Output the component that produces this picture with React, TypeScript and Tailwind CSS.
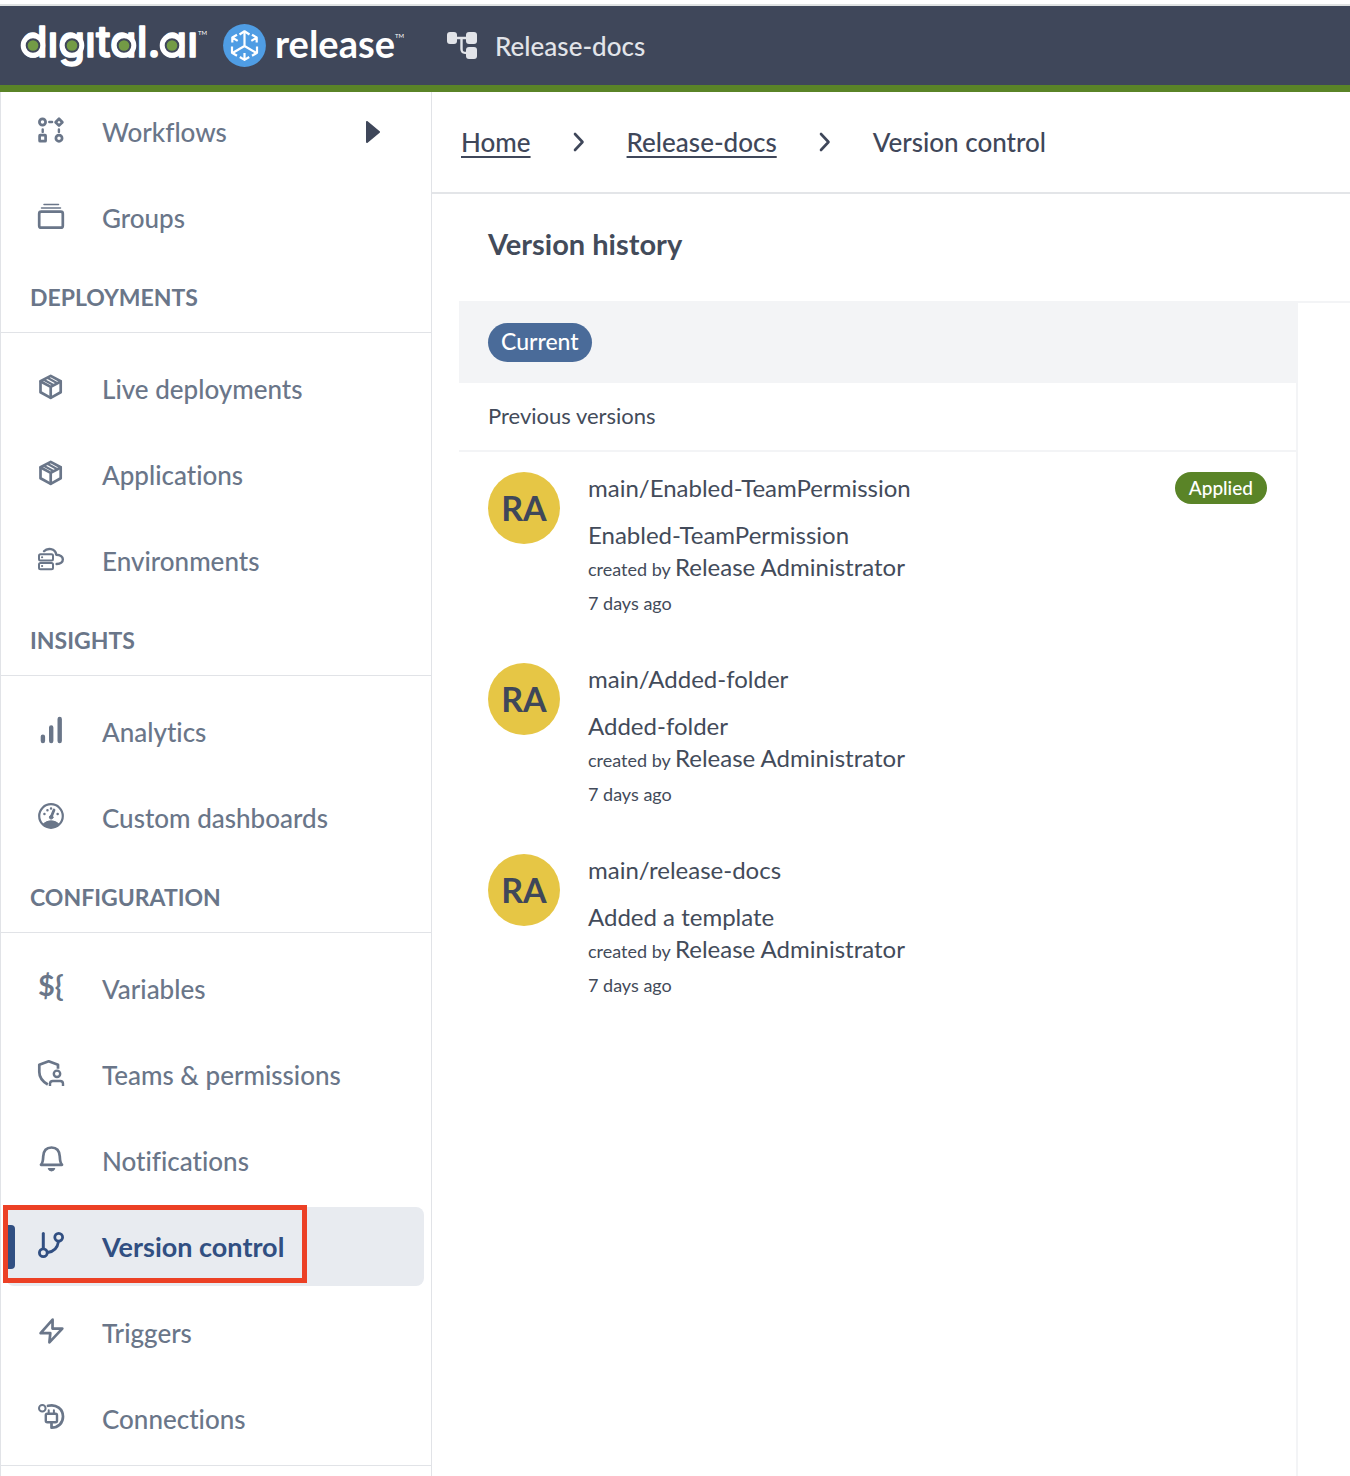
import type { ReactNode } from 'react'
import { clsx } from 'clsx'

type NavItem = {
  label: string
  icon: ReactNode
  active?: boolean
  expandable?: boolean
}

type NavSection = {
  title?: string
  items: NavItem[]
}

type Version = {
  name: string
  message: string
  author: string
  initials: string
  age: string
  applied?: boolean
}

function Icon({ children }: { children: ReactNode }) {
  return (
    <svg
      viewBox="0 0 26 26"
      className="mb-1 size-[26px] shrink-0 overflow-visible"
      fill="none"
      stroke="currentColor"
      strokeWidth="2.7"
      strokeLinecap="round"
      strokeLinejoin="round"
      aria-hidden="true"
    >
      {children}
    </svg>
  )
}

const cubeIcon = (
  <Icon>
    <path d="M12.7 1.9 22.7 7.3v11L12.7 23.9 2.5 18.3v-11Z" />
    <path d="m2.7 7.5 10 5.4 10-5.4M12.7 13v10.5" />
    <path d="m9.8 4 9.2 5M6.2 6l9.2 5" strokeWidth="2" />
  </Icon>
)

const sections: NavSection[] = [
  {
    items: [
      {
        label: 'Workflows',
        expandable: true,
        icon: (
          <Icon>
            <circle cx="4.5" cy="5" r="3.1" />
            <path d="m21 1.8 3.4 3.4L21 8.6l-3.4-3.4Z" />
            <rect x="1.6" y="18.2" width="6" height="6" rx="0.5" />
            <circle cx="21" cy="21.2" r="3.1" />
            <path d="M11.3 5h2.8M4.7 12.5v2.4M20.9 12.5v2.4" strokeWidth="2.4" />
          </Icon>
        ),
      },
      {
        label: 'Groups',
        icon: (
          <Icon>
            <rect x="1.2" y="8.7" width="23.6" height="16" rx="2" />
            <path d="M3.5 5h19M6 1.5h14.5" strokeWidth="1.5" />
          </Icon>
        ),
      },
    ],
  },
  {
    title: 'DEPLOYMENTS',
    items: [
      { label: 'Live deployments', icon: cubeIcon },
      { label: 'Applications', icon: cubeIcon },
      {
        label: 'Environments',
        icon: (
          <Icon>
            <g strokeWidth="2">
              <rect x="1" y="8.2" width="14" height="6.2" rx="1.5" />
              <rect x="1" y="17" width="14" height="6.2" rx="1.5" />
              <path d="M4 11.3h.2M4 20.1h.2" />
            </g>
            <path d="M6 5.2c3-3.3 11.5-3.4 12.2 3.5 8.8 0 8.8 9.4.4 9.3" strokeWidth="2.4" />
          </Icon>
        ),
      },
    ],
  },
  {
    title: 'INSIGHTS',
    items: [
      {
        label: 'Analytics',
        icon: (
          <Icon>
            <path d="M4.9 19.6V24M13.2 10.5V24M21.7 2v22" strokeWidth="4.4" />
          </Icon>
        ),
      },
      {
        label: 'Custom dashboards',
        icon: (
          <Icon>
            <circle cx="13" cy="13" r="11.8" strokeWidth="2.2" />
            <path d="M5 21.3c4-4.6 12-4.6 16 0-4 4.5-12 4.5-16 0Z" fill="currentColor" strokeWidth="1" />
            <path d="m16 7-2.6 6.5" strokeWidth="2.8" />
            <circle cx="13.2" cy="14.3" r="1.8" fill="currentColor" strokeWidth="1" />
            <path d="M6.4 11h.1M9.4 7.3h.1M13 5.5h.1M19.6 11h.1" strokeWidth="2.4" />
          </Icon>
        ),
      },
    ],
  },
  {
    title: 'CONFIGURATION',
    items: [
      {
        label: 'Variables',
        icon: (
          <span
            className="mb-2 w-[26px] shrink-0 text-[29px] leading-[26px] font-bold whitespace-nowrap"
            aria-hidden="true"
          >
            {'${'}
          </span>
        ),
      },
      {
        label: 'Teams & permissions',
        icon: (
          <Icon>
            <g strokeLinecap="butt">
              <path d="M9.8 24.5C4.5 21.5 1.3 17 1.3 12V4.8l9.4-3.5L20 4.8v4" />
              <circle cx="19" cy="13.8" r="3.2" strokeWidth="2.4" />
              <path d="M12 26v-2.2c0-1.9 1-2.8 2.8-2.8h7.4c1.8 0 2.8.9 2.8 2.8V26" strokeWidth="2.4" />
            </g>
          </Icon>
        ),
      },
      {
        label: 'Notifications',
        icon: (
          <Icon>
            <path d="M3 18.8h21c-2-2-2-4.5-2.2-8.3C21.5 5 18.5 1.5 13.5 1.5S5.5 5 5.2 10.5C5 14.3 5 16.8 3 18.8Z" />
            <path d="M10.5 22.7c1.2 2.6 4.8 2.6 6 0Z" fill="currentColor" strokeWidth="1.5" />
          </Icon>
        ),
      },
      {
        label: 'Version control',
        active: true,
        icon: (
          <Icon>
            <path d="M5.3 1.5v15" strokeWidth="3" />
            <circle cx="20.7" cy="5.3" r="3.9" strokeWidth="2.8" />
            <circle cx="5.3" cy="20.7" r="3.9" strokeWidth="2.8" />
            <path d="M20.5 9.5c-1 6.5-4.5 10.3-11 11" strokeWidth="2.8" />
          </Icon>
        ),
      },
      {
        label: 'Triggers',
        icon: (
          <Icon>
            <path d="M14.6 1.7 2.6 15.2h9.7l-.9 9.2 12.9-13.8h-9.8Z" />
          </Icon>
        ),
      },
      {
        label: 'Connections',
        icon: (
          <Icon>
            <circle cx="4.3" cy="4.3" r="3.3" strokeWidth="2" />
            <path d="M10 1.8c8.500-2.200 15 3.500 15 10.700 0 6.500-4.500 11.200-11.500 11.200v-4.500" />
            <rect x="7.8" y="9.8" width="11.2" height="8.4" rx="1.5" strokeWidth="2.4" />
            <path d="M10.7 6.2v3M15.9 6.2v3" strokeWidth="2" />
          </Icon>
        ),
      },
    ],
  },
]

const versions: Version[] = [
  {
    name: 'main/Enabled-TeamPermission',
    message: 'Enabled-TeamPermission',
    author: 'Release Administrator',
    initials: 'RA',
    age: '7 days ago',
    applied: true,
  },
  {
    name: 'main/Added-folder',
    message: 'Added-folder',
    author: 'Release Administrator',
    initials: 'RA',
    age: '7 days ago',
  },
  {
    name: 'main/release-docs',
    message: 'Added a template',
    author: 'Release Administrator',
    initials: 'RA',
    age: '7 days ago',
  },
]

// x centres of the round bowls in the wordmark
const bowls = [12, 51, 103, 151]

function DigitalLogo() {
  return (
    <svg viewBox="0 0 186 56" className="h-14 w-[186px] shrink-0 overflow-visible" role="img" aria-label="digital.ai">
      <text
        x="0"
        y="39"
        fill="#fff"
        stroke="#fff"
        strokeWidth="1.5"
        strokeLinejoin="round"
        className="font-['Inter',sans-serif] text-[43px] font-medium [font-feature-settings:'cv11']"
      >
        dıgıtal.aı
      </text>
      <text x="177" y="17" fill="#fff" className="font-['Lato',sans-serif] text-[6px]">
        TM
      </text>
      {bowls.map((cx) => (
        <g key={cx}>
          <circle cx={cx} cy="27.5" r="9.8" fill="#3f475a" stroke="#fff" strokeWidth="5" />
          <circle cx={cx} cy="27.5" r="5.3" fill="#739b45" />
        </g>
      ))}
    </svg>
  )
}

function ReleaseLogo() {
  return (
    <div className="flex items-center gap-[9px] text-white">
      <svg viewBox="0 0 43 43" className="size-[43px] shrink-0" fill="none" aria-hidden="true">
        <circle cx="21.5" cy="21.5" r="21.4" fill="#4f9de4" />
        <g stroke="#fff" strokeWidth="2.2" strokeLinejoin="round">
          <path d="M21.5 8v14l-12 7M21.5 22l12 7" />
          <path d="m16.5 10.5 5-3.2 5 3.2" />
          <path d="M9 22.5v6.3l5 3M34 22.5v6.3l-5 3" />
          <path d="M9.3 18.5v-5l4.7-2.7M9.3 13.5l5.4 3.4M33.7 18.5v-5L29 10.8M33.700 13.500l-5.400 3.400" />
          <path d="M21.5 35.5V29M16.8 33l4.7 2.9 4.700-2.900" />
        </g>
      </svg>
      <span className="flex items-start pb-1.5">
        <span className="text-[38px] leading-[44px] font-bold">release</span>
        <span className="pt-3 text-[6px] leading-none">TM</span>
      </span>
    </div>
  )
}

function Header() {
  return (
    <header className="flex h-[88px] items-center border-t-2 border-b-7 border-t-[#dfe2e2] border-b-[#5a8427] bg-[#3f475a] pl-[21px]">
      <DigitalLogo />
      <div className="ml-4">
        <ReleaseLogo />
      </div>
      <div className="ml-[43px] flex items-center gap-[18px] text-[#e2e4e9]">
        <svg viewBox="0 0 30 28" className="h-7 w-[30px] shrink-0" fill="currentColor" aria-hidden="true">
          <rect x="0" y="0" width="10" height="12" rx="3" />
          <rect x="19" y="0" width="11" height="12" rx="3" />
          <rect x="19" y="15" width="11" height="12" rx="3" />
          <path d="M9 6h11M14.5 6v11c0 3 1 4 5 4" fill="none" stroke="currentColor" strokeWidth="2.4" />
        </svg>
        <span className="text-[26px] leading-8 font-medium">Release-docs</span>
      </div>
    </header>
  )
}

function NavRow({ label, icon, active, expandable }: NavItem) {
  return (
    <li>
      <a
        href="#"
        aria-current={active ? 'page' : undefined}
        className={clsx(
          'relative mr-[7px] ml-[5px] flex h-[79px] items-center rounded-lg pl-8 leading-8',
          active ? 'bg-[#e8ebf0] text-[27px] font-bold text-[#314f82]' : 'text-[26px] font-medium text-[#6a7689]',
        )}
      >
        {active && (
          <>
            <span className="absolute left-0 h-11 w-[9px] rounded-r bg-[#314f82]" />
            <span className="absolute -top-0.5 -left-[3px] h-[78px] w-[304px] border-5 border-[#ec4025]" />
          </>
        )}
        {icon}
        <span className="ml-[38px]">{label}</span>
        {expandable && (
          <svg viewBox="0 0 14 22" className="mr-11 ml-auto h-[22px] w-3.5" aria-hidden="true">
            <path d="M1 1v20L13 11Z" fill="#3f475a" stroke="#3f475a" strokeWidth="2" strokeLinejoin="round" />
          </svg>
        )}
      </a>
    </li>
  )
}

function Sidebar() {
  return (
    <nav className="w-[432px] shrink-0 border-x border-[#e1e3e7]">
      {sections.map((section) => (
        <section key={section.items[0].label}>
          {section.title && (
            <h2 className="mb-4 flex h-[76px] items-center border-b border-[#e1e3e7] pt-1 pl-[29px] text-[23px] leading-7 font-bold text-[#6a7689]">
              {section.title}
            </h2>
          )}
          <ul className="flex flex-col gap-[7px]">
            {section.items.map((item) => (
              <NavRow key={item.label} {...item} />
            ))}
          </ul>
        </section>
      ))}
      <div className="mt-[7px] h-2.5 border-t border-[#e1e3e7]" />
    </nav>
  )
}

function Chevron() {
  return (
    <svg viewBox="0 0 12 20" className="h-5 w-3 shrink-0" fill="none" aria-hidden="true">
      <path d="m2 2 7.5 8L2 18" stroke="#3f475a" strokeWidth="2.6" strokeLinecap="round" strokeLinejoin="round" />
    </svg>
  )
}

function Breadcrumbs() {
  return (
    <nav
      aria-label="Breadcrumb"
      className="flex h-[102px] items-center gap-[42px] border-b-2 border-[#e3e5e8] pl-[29px] text-[26px] leading-8 font-medium text-[#3f475a]"
    >
      <a href="#" className="underline decoration-2 underline-offset-4">
        Home
      </a>
      <Chevron />
      <a href="#" className="underline decoration-2 underline-offset-4">
        Release-docs
      </a>
      <Chevron />
      <span aria-current="page">Version control</span>
    </nav>
  )
}

function VersionRow({ name, message, author, initials, age, applied }: Version) {
  return (
    <li className="flex items-start px-[29px] pt-5 pb-7">
      <span className="flex size-[72px] shrink-0 items-center justify-center rounded-full bg-[#e6c645] text-[34px] leading-none font-bold text-[#3f475a]">
        {initials}
      </span>
      <div className="ml-7 flex-1">
        <h3 className="mb-[15px] text-2xl leading-8">{name}</h3>
        <p className="text-2xl leading-8">{message}</p>
        <p className="text-lg leading-8">
          created by <span className="text-2xl leading-8">{author}</span>
        </p>
        <p className="mt-1.5 text-lg leading-6">{age}</p>
      </div>
      {applied && (
        <span className="rounded-full bg-[#5a8427] px-3.5 text-[19px] leading-8 font-medium text-white">Applied</span>
      )}
    </li>
  )
}

export default function App() {
  return (
    <div className="flex min-h-screen flex-col bg-white pt-1 font-['Lato',sans-serif] text-[#434b5a] [font-variant-ligatures:none]">
      <Header />
      <div className="flex flex-1">
        <Sidebar />
        <main className="flex min-w-0 flex-1 flex-col">
          <Breadcrumbs />
          <h1 className="flex h-[107px] items-center pb-2 pl-14 text-[29px] leading-9 font-bold">Version history</h1>
          <div className="flex flex-1 pl-[27px]">
            <section className="flex-1 border-r-2 border-[#f3f4f6]">
              <div className="flex h-[82px] items-center bg-[#f3f4f6] pl-[29px]">
                <span className="rounded-full bg-[#4a6b99] px-[13px] pb-[3px] text-[23px] leading-9 font-medium text-white">
                  Current
                </span>
              </div>
              <h2 className="border-b-2 border-[#f3f4f6] pt-[17px] pb-[18px] pl-[29px] text-[22px] leading-8">
                Previous versions
              </h2>
              <ul>
                {versions.map((version) => (
                  <VersionRow key={version.name} {...version} />
                ))}
              </ul>
            </section>
            <div className="w-[52px] shrink-0 border-t-2 border-[#f3f4f6]" />
          </div>
        </main>
      </div>
    </div>
  )
}
